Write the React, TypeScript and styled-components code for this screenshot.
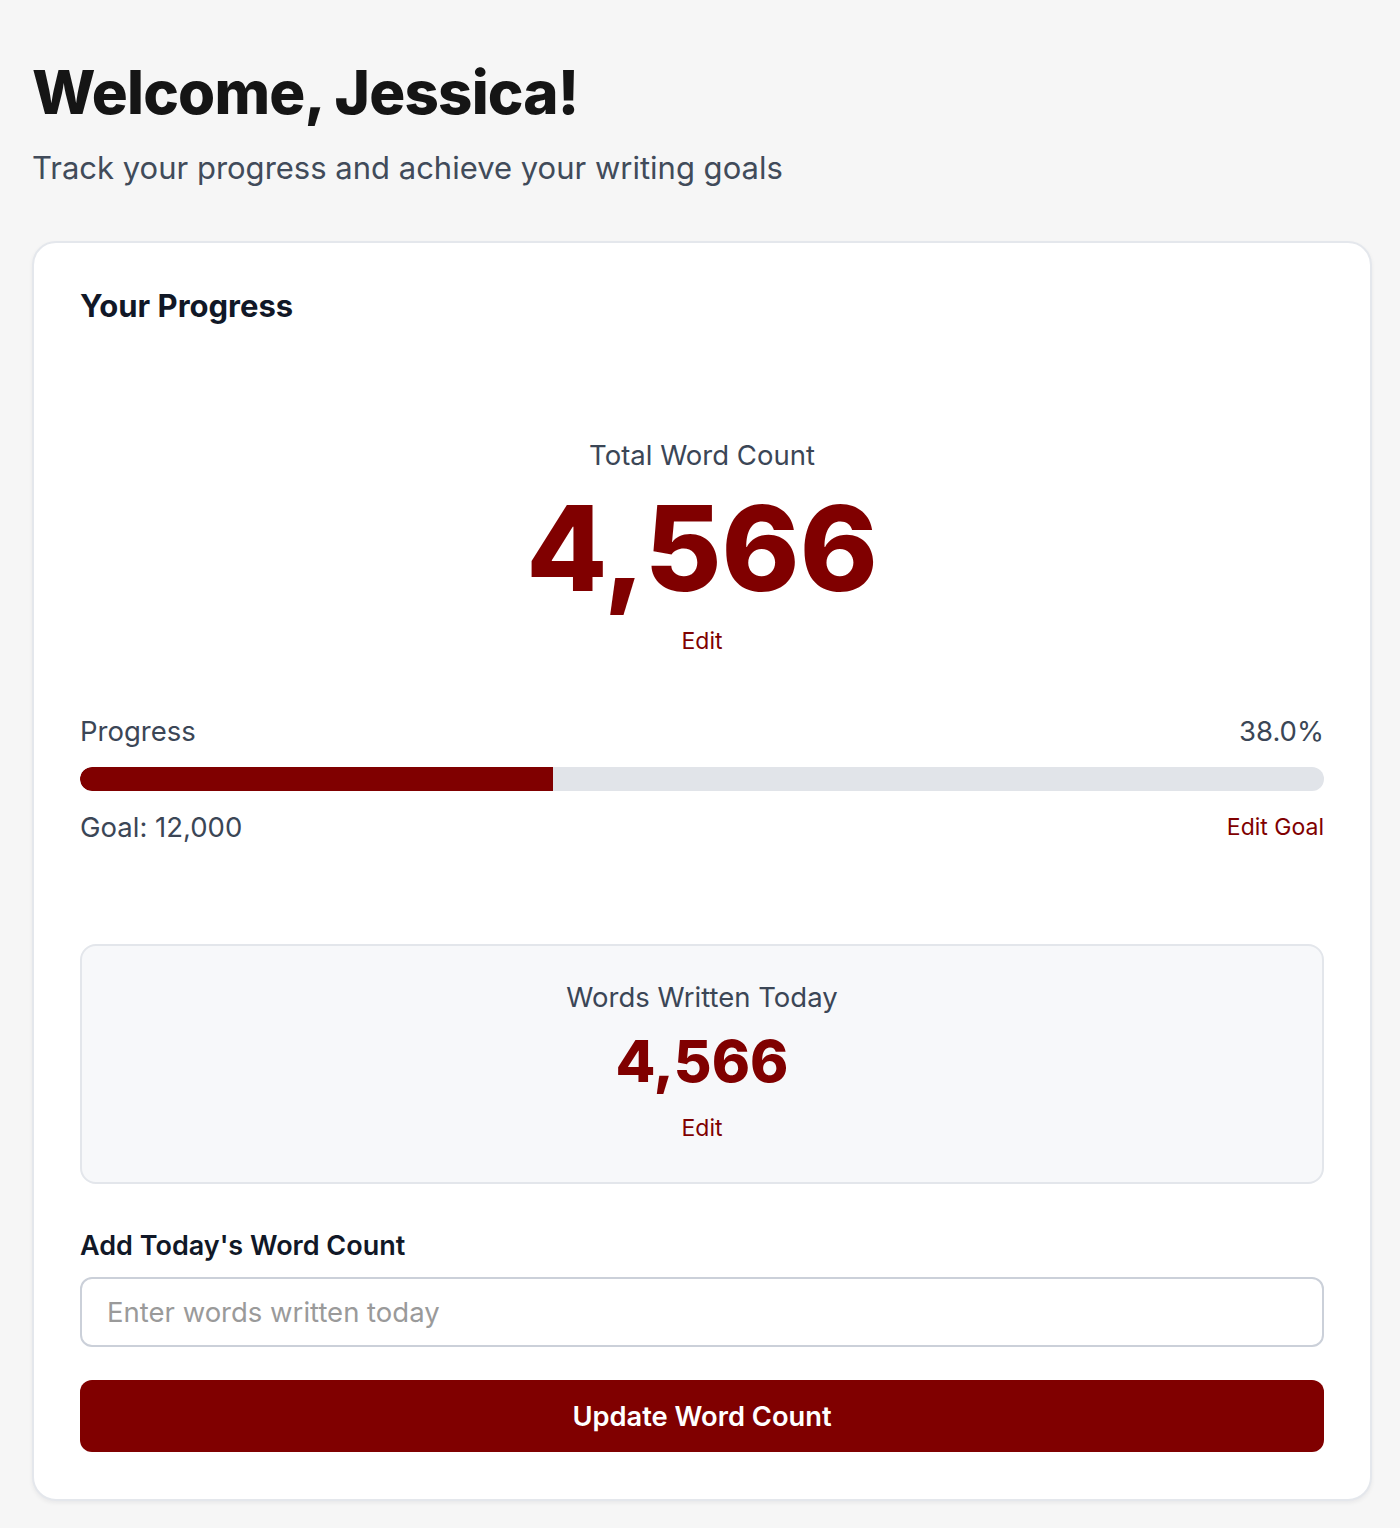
import React, { useState } from 'react'
import styled, { createGlobalStyle } from 'styled-components'

const GlobalStyle = createGlobalStyle`
  * {
    box-sizing: border-box;
  }

  body {
    margin: 0;
    background: #f6f6f6;
    font-family: Inter, 'Liberation Sans', Arial, sans-serif;
    color: #374151;
  }
`

const RED = '#800000'

const Page = styled.main`
  padding: 56px 28px 28px 32px;
`

const Title = styled.h1`
  margin: 0;
  font-size: 60px;
  line-height: 72px;
  font-weight: 800;
  color: #151515;
  letter-spacing: -0.8px;
`

const Subtitle = styled.p`
  margin: 22px 0 0;
  font-size: 31px;
  line-height: 36px;
  color: #414b5a;
`

const Card = styled.section`
  margin-top: 55px;
  background: #fff;
  border: 2px solid #e4e7ec;
  border-radius: 24px;
  box-shadow: 0 2px 4px rgba(15, 23, 42, 0.06);
  padding: 48px 46px 47px;
  display: flex;
  flex-direction: column;
`

const CardTitle = styled.h2`
  margin: 0;
  font-size: 31px;
  line-height: 30px;
  font-weight: 700;
  color: #111827;
`

const Hero = styled.div`
  margin-top: 118px;
  display: flex;
  flex-direction: column;
  align-items: center;
`

const StatLabel = styled.div`
  font-size: 27.5px;
  line-height: 32px;
  color: #3b4656;
`

const StatValue = styled.div<{ $size: number; $line: number }>`
  margin-top: 16px;
  font-size: ${(p) => p.$size}px;
  line-height: ${(p) => p.$line}px;
  font-weight: 800;
  color: ${RED};
`

const LinkButton = styled.button<{ $gap?: number }>`
  margin-top: ${(p) => p.$gap ?? 0}px;
  padding: 0;
  border: 0;
  background: none;
  font-family: inherit;
  font-size: 23px;
  line-height: 28px;
  color: ${RED};
  cursor: pointer;
`

const Row = styled.div<{ $gap: number }>`
  margin-top: ${(p) => p.$gap}px;
  display: flex;
  justify-content: space-between;
  align-items: center;
  font-size: 27.5px;
  line-height: 32px;
  color: #3b4656;
`

const Track = styled.div`
  margin-top: 20px;
  height: 24px;
  border-radius: 12px;
  background: #e1e4e9;
  overflow: hidden;
`

const Fill = styled.div`
  height: 100%;
  background: ${RED};
  border-radius: 12px 0 0 12px;
`

const TodayBox = styled.div`
  margin-top: 101px;
  background: #f7f8fa;
  border: 2px solid #e3e6eb;
  border-radius: 16px;
  padding: 35px 24px 40px;
  display: flex;
  flex-direction: column;
  align-items: center;
`

const FieldLabel = styled.label`
  margin-top: 46px;
  font-size: 27px;
  line-height: 32px;
  font-weight: 600;
  color: #111827;
`

const Input = styled.input`
  margin-top: 15px;
  height: 70px;
  width: 100%;
  padding: 0 25px;
  border: 2px solid #cbd0d9;
  border-radius: 12px;
  background: #fff;
  font-family: inherit;
  font-size: 27.5px;
  color: #111827;
  outline: none;

  &::placeholder {
    color: #9a9a9a;
  }
`

const SubmitButton = styled.button`
  margin-top: 33px;
  height: 72px;
  width: 100%;
  border: 0;
  border-radius: 12px;
  background: ${RED};
  color: #fff;
  font-family: inherit;
  font-size: 27.3px;
  font-weight: 600;
  cursor: pointer;
`

const fmt = (n: number) => n.toLocaleString('en-US')

export default function App() {
  const [total] = useState(4566)
  const [today] = useState(4566)
  const [goal] = useState(12000)
  const [entry, setEntry] = useState('')
  const pct = (total / goal) * 100

  return (
    <>
      <GlobalStyle />
      <Page>
        <Title>Welcome, Jessica!</Title>
        <Subtitle>Track your progress and achieve your writing goals</Subtitle>

        <Card>
          <CardTitle>Your Progress</CardTitle>

          <Hero>
            <StatLabel>Total Word Count</StatLabel>
            <StatValue $size={118} $line={122}>
              {fmt(total)}
            </StatValue>
            <LinkButton $gap={18}>Edit</LinkButton>
          </Hero>

          <Row $gap={60}>
            <span>Progress</span>
            <span>{pct.toFixed(1)}%</span>
          </Row>
          <Track>
            <Fill style={{ width: `${pct}%` }} />
          </Track>
          <Row $gap={20}>
            <span>Goal: {fmt(goal)}</span>
            <LinkButton>Edit Goal</LinkButton>
          </Row>

          <TodayBox>
            <StatLabel>Words Written Today</StatLabel>
            <StatValue $size={58} $line={64}>
              {fmt(today)}
            </StatValue>
            <LinkButton $gap={21}>Edit</LinkButton>
          </TodayBox>

          <FieldLabel htmlFor="today-count">Add Today's Word Count</FieldLabel>
          <Input
            id="today-count"
            type="number"
            placeholder="Enter words written today"
            value={entry}
            onChange={(e) => setEntry(e.target.value)}
          />
          <SubmitButton>Update Word Count</SubmitButton>
        </Card>
      </Page>
    </>
  )
}
